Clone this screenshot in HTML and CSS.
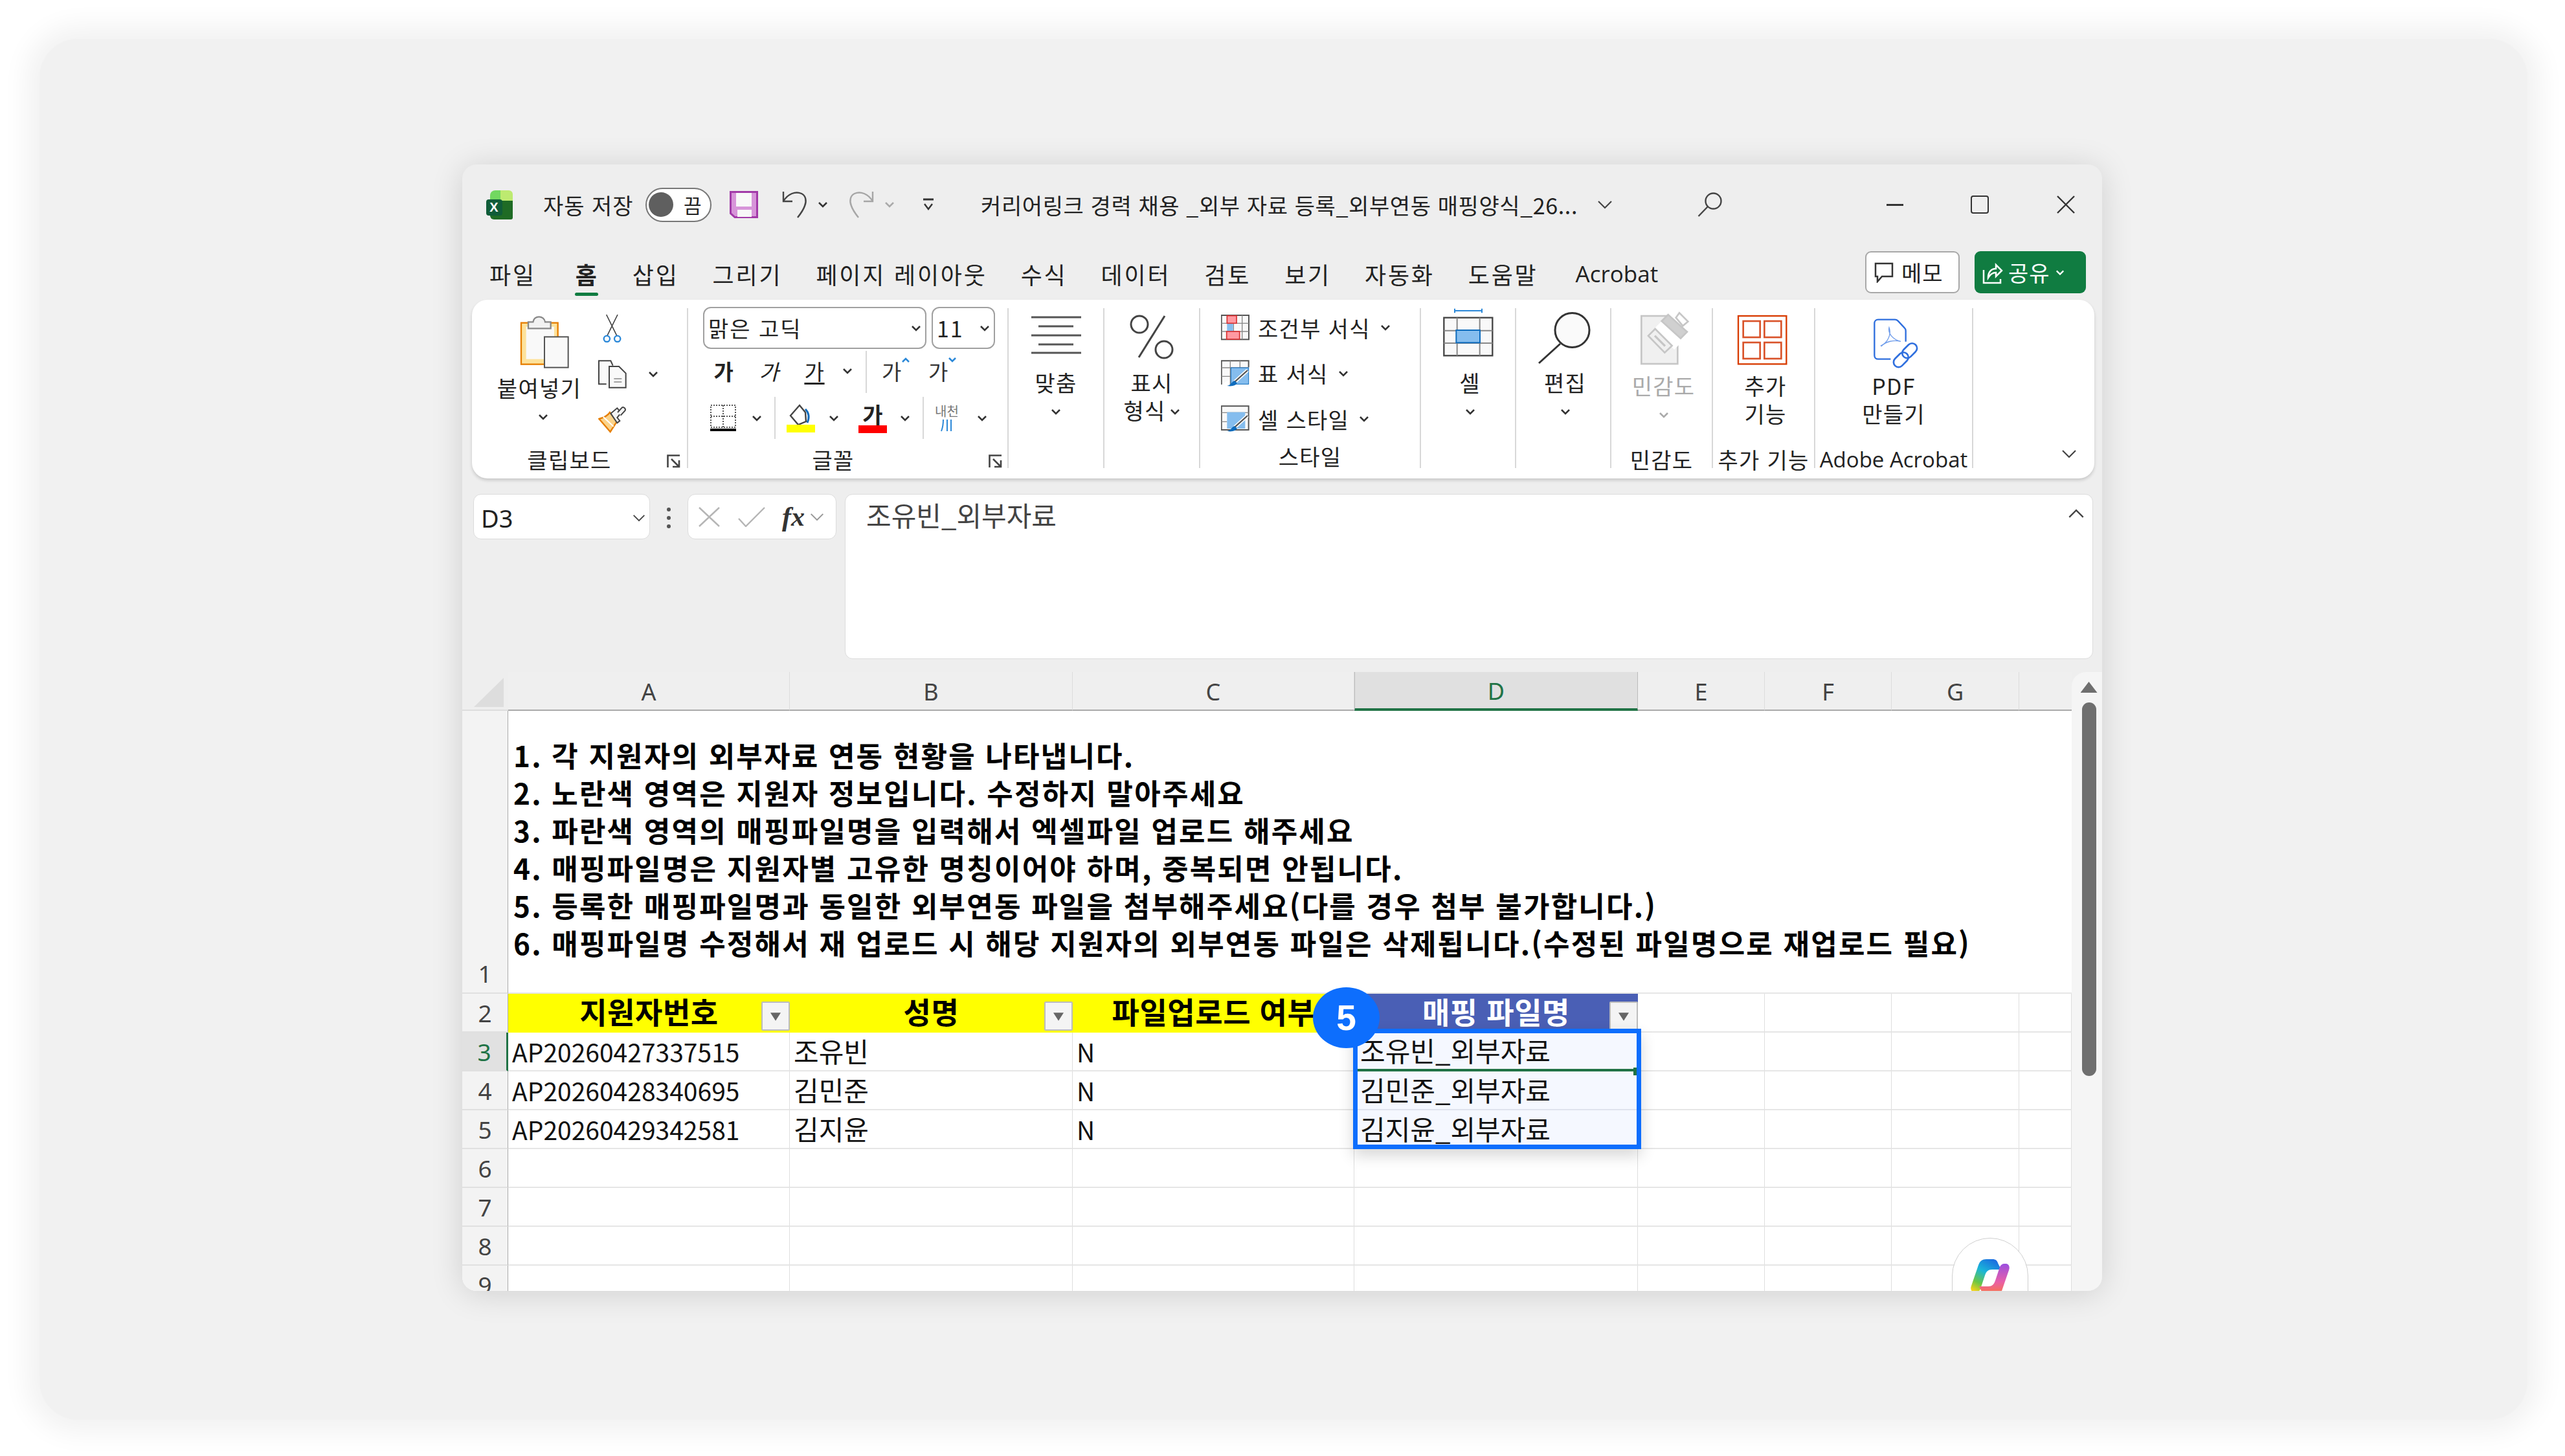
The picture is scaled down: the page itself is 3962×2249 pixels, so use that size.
FILE: index.html
```html
<!DOCTYPE html>
<html lang="ko">
<head>
<meta charset="utf-8">
<title>Excel</title>
<link rel="stylesheet" href="styles.css">
</head>
<body>
<svg class="defs" aria-hidden="true">
  <symbol id="caret" viewBox="0 0 16 10"><path d="M2 2l6 6 6-6" fill="none" stroke="currentColor" stroke-width="2.6"/></symbol>
  <symbol id="vee" viewBox="0 0 24 14"><path d="M2 2l10 10 10-10" fill="none" stroke="currentColor" stroke-width="2.2"/></symbol>
  <symbol id="launcher" viewBox="0 0 24 22"><path d="M1.500 20V1.500H20M7 7l12 12M19 9v10H9" fill="none" stroke="#444" stroke-width="2.600"/></symbol>
  <symbol id="filter" viewBox="0 0 14 14"><path d="M0 2h14L7 13z" fill="#666"/></symbol>
</svg>
<main class="stage">
<div class="window">

  <header class="titlebar">
    <svg class="ic-excel" viewBox="0 0 41 45"><path d="M6 8a8 8 0 0 1 8-8h9v16H6z" fill="#72d860"/><path d="M22 0h13a6 6 0 0 1 6 6v10H22z" fill="#bdea70"/><path d="M6 16h35v26a3 3 0 0 1-3 3H12a6 6 0 0 1-6-6z" fill="#1f6b25"/><rect x="0" y="14" width="25" height="25" rx="4" fill="#105c38"/><text x="12.500" y="33" class="ic-excel-x">X</text></svg>
    <span class="autosave">자동 저장</span>
    <span class="toggle"><i class="toggle-knob"></i><b class="toggle-text">끔</b></span>
    <svg class="ic-save" viewBox="0 0 44 42"><path d="M1.500 1.500h41v39H8l-6.500-6z" fill="#d795d9" stroke="#a23aa8" stroke-width="3"/><rect x="10" y="3" width="24" height="21" fill="#f8f8f8"/><rect x="12" y="29" width="22" height="11" fill="#f8f8f8"/></svg>
    <svg class="ic-undo" viewBox="0 0 40 44"><path d="M3 2v15h14M3 17C10 5 22 1 31 5c7 3 8 12 5 19-2 6-7 13-11 18" fill="none" stroke="#444" stroke-width="2.400"/></svg>
    <svg class="caret undo-caret"><use href="#caret"/></svg>
    <svg class="ic-redo" viewBox="0 0 40 44"><path d="M37 2v15H23M37 17C30 5 18 1 9 5 2 8 1 17 4 24c2 6 7 13 11 18" fill="none" stroke="#a6a6a6" stroke-width="2.400"/></svg>
    <svg class="caret redo-caret"><use href="#caret"/></svg>
    <svg class="ic-custom" viewBox="0 0 18 20"><path d="M1 2h16" stroke="#333" stroke-width="3"/><path d="M3 9l6 8 6-8" fill="none" stroke="#333" stroke-width="2.400"/></svg>
    <span class="doc-title">커리어링크 경력 채용 _외부 자료 등록_외부연동 매핑양식_26...</span>
    <svg class="vee title-vee"><use href="#vee"/></svg>
    <svg class="ic-search" viewBox="0 0 38 38"><circle cx="24.500" cy="13.500" r="12" fill="none" stroke="#444" stroke-width="2.400"/><path d="M16 22L1.500 37" stroke="#444" stroke-width="2.400"/></svg>
    <i class="win-min"></i>
    <i class="win-max"></i>
    <svg class="win-close" viewBox="0 0 28 28"><path d="M1 1l26 26M27 1L1 27" stroke="#333" stroke-width="2.400"/></svg>
  </header>

  <nav class="tabs">
    <span class="tab">파일</span>
    <span class="tab tab-active">홈</span>
    <span class="tab">삽입</span>
    <span class="tab">그리기</span>
    <span class="tab">페이지 레이아웃</span>
    <span class="tab">수식</span>
    <span class="tab">데이터</span>
    <span class="tab">검토</span>
    <span class="tab">보기</span>
    <span class="tab">자동화</span>
    <span class="tab">도움말</span>
    <span class="tab tab-latin">Acrobat</span>
    <span class="memo"><svg class="ic-memo" viewBox="0 0 30 32"><path d="M2 2h26v20H12l-7 8v-8H2z" fill="none" stroke="#333" stroke-width="2.500"/></svg>메모</span>
    <span class="share"><svg class="ic-share" viewBox="0 0 32 36"><path d="M2 14v20h26v-6" fill="none" stroke="#fff" stroke-width="2.500"/><path d="M9 26c0-9 5-14 12-14V6l9 9-9 9v-6c-5 0-9 3-12 8z" fill="none" stroke="#fff" stroke-width="2.500"/></svg>공유<svg class="caret share-caret"><use href="#caret"/></svg></span>
  </nav>

  <section class="ribbon">
    <div class="group g-clip">
      <div class="group-body clip-body">
        <div class="big big-paste">
          <div class="big-icon"><svg class="ic-paste" viewBox="-51 18 420 309"><rect x="75" y="86" width="170" height="192" fill="#fde29b" stroke="#e67e00" stroke-width="7"/><rect x="98" y="104" width="130" height="150" fill="#f9f9f9"/><path d="M108 112V82h22c3-32 52-32 56 0h26v30z" fill="#f2f2f2" stroke="#888" stroke-width="7"/><rect x="183" y="151" width="110" height="142" fill="#f9f9f9" stroke="#555" stroke-width="6"/></svg></div>
          <div class="line">붙여넣기</div>
          <div class="line"><svg class="caret paste-caret"><use href="#caret"/></svg></div>
        </div>
        <div class="clip-tools">
          <svg class="tool" viewBox="432 45 132 132"><path d="M470 48l52 105M522 48l-52 105" stroke="#444" stroke-width="5"/><circle cx="472" cy="160" r="14" fill="#fff" stroke="#2b88d8" stroke-width="7"/><circle cx="521" cy="160" r="14" fill="#fff" stroke="#2b88d8" stroke-width="7"/></svg>
          <div class="tool-row"><svg class="tool" viewBox="432 258 132 132"><path d="M470 370h-35V262h55l10 22" fill="#f9f9f9" stroke="#444" stroke-width="6"/><path d="M483 386V288h45l32 32v66z" fill="#f9f9f9" stroke="#444" stroke-width="6"/><path d="M505 345h36M505 360h36" stroke="#888" stroke-width="5"/></svg><svg class="caret copy-caret"><use href="#caret"/></svg></div>
          <svg class="tool" viewBox="432 470 132 132"><path d="M436 530l52 60 32-50-34-40c-10 15-30 25-50 30z" fill="#fbd38a" stroke="#e67e00" stroke-width="7"/><path d="M455 520l48 45" stroke="#fff" stroke-width="6"/><path d="M490 505l30-25 18 22-18 22 12 15-12 10z" fill="#f4f4f4" stroke="#444" stroke-width="6"/><path d="M522 500l20-22c8-6 20 6 14 14l-20 22" fill="#f4f4f4" stroke="#444" stroke-width="6"/></svg>
        </div>
      </div>
      <div class="group-label label-clip"><span class="label-text">클립보드</span><svg class="launcher"><use href="#launcher"/></svg></div>
    </div>

    <div class="group g-font">
      <div class="group-body font-body">
        <div class="font-row">
          <span class="combo combo-name">맑은 고딕<svg class="caret"><use href="#caret"/></svg></span>
          <span class="combo combo-size">11<svg class="caret"><use href="#caret"/></svg></span>
        </div>
        <div class="style-row">
          <span class="fbtn fbtn-bold">가</span>
          <span class="fbtn fbtn-italic">가</span>
          <span class="fbtn fbtn-under">가</span>
          <svg class="caret under-caret"><use href="#caret"/></svg>
          <i class="vsep sep-size"></i>
          <span class="size-btn grow">가<svg class="size-mark" viewBox="0 0 12 8"><path d="M1 7l5-5 5 5" fill="none" stroke="#2b88d8" stroke-width="2.600"/></svg></span>
          <span class="size-btn shrink">가<svg class="size-mark" viewBox="0 0 12 8"><path d="M1 1l5 5 5-5" fill="none" stroke="#2b88d8" stroke-width="2.600"/></svg></span>
        </div>
        <div class="tool-strip">
          <svg class="ic-border" viewBox="0 0 40 42"><path d="M1 1h38v34H1zM20 1v34M1 18h38" fill="none" stroke="#555" stroke-width="2" stroke-dasharray="2 2"/><path d="M0 39h40" stroke="#000" stroke-width="4"/></svg>
          <svg class="caret c-border"><use href="#caret"/></svg>
          <i class="vsep sep-a"></i>
          <svg class="ic-fill" viewBox="0 0 44 44"><path d="M20 2l9 11 1 14-12 5L6 18z" fill="#fff" stroke="#444" stroke-width="2.400"/><path d="M29 8c6 6 6 14 3 21" fill="none" stroke="#0f6cbd" stroke-width="3"/><rect y="32" width="44" height="12" fill="#ffff00"/></svg>
          <svg class="caret c-fill"><use href="#caret"/></svg>
          <span class="font-colour"><b class="font-colour-text">가</b><i class="font-colour-bar"></i></span>
          <svg class="caret c-colour"><use href="#caret"/></svg>
          <i class="vsep sep-b"></i>
          <span class="phonetic"><span class="phonetic-text">내천</span><svg class="phonetic-mark" viewBox="0 0 20 20"><path d="M4 1c0 7-1 13-3 18M10 1v18M16 1v18" fill="none" stroke="#2b88d8" stroke-width="2"/></svg></span>
          <svg class="caret c-phonetic"><use href="#caret"/></svg>
        </div>
      </div>
      <div class="group-label label-font"><span class="label-text">글꼴</span><svg class="launcher"><use href="#launcher"/></svg></div>
    </div>

    <div class="group g-align">
      <div class="group-body">
        <div class="big">
          <div class="big-icon"><svg class="ic-big" viewBox="1587 476 90 95"><path d="M1594 490h77M1594 518h77M1594 545h77M1605 504h54M1605 532h54" stroke="#555" stroke-width="3"/></svg></div>
          <div class="line">맞춤</div>
          <div class="line"><svg class="caret"><use href="#caret"/></svg></div>
        </div>
      </div>
    </div>

    <div class="group g-num">
      <div class="group-body">
        <div class="big">
          <div class="big-icon"><svg class="ic-big" viewBox="1735 476 90 95"><ellipse cx="1761" cy="501" rx="13" ry="13" fill="none" stroke="#444" stroke-width="3"/><path d="M1800 488l-40 64" stroke="#444" stroke-width="3"/><ellipse cx="1799" cy="540" rx="13" ry="13" fill="none" stroke="#444" stroke-width="3"/></svg></div>
          <div class="line">표시</div>
          <div class="line">형식<svg class="caret inline-caret"><use href="#caret"/></svg></div>
        </div>
      </div>
    </div>

    <div class="group g-styles">
      <div class="group-body styles-list">
        <div class="style-item">
          <svg class="style-icon" viewBox="52 52 132 120"><rect x="54" y="55" width="127" height="112" fill="#f9f9f9" stroke="#555" stroke-width="6"/><path d="M54 92h127M54 130h127M110 55v112M150 55v112" stroke="#888" stroke-width="4"/><rect x="80" y="92" width="28" height="38" fill="#85bdee"/><rect x="80" y="57" width="44" height="35" fill="#ff9aa2" stroke="#d83030" stroke-width="5"/><rect x="78" y="130" width="60" height="36" fill="#ff9aa2" stroke="#d83030" stroke-width="5"/></svg>
          <span>조건부 서식</span><svg class="caret"><use href="#caret"/></svg>
        </div>
        <div class="style-item">
          <svg class="style-icon" viewBox="52 264 132 126"><path d="M54 378V268h126v30" fill="#f9f9f9" stroke="#555" stroke-width="6"/><path d="M54 300h126M54 340h50M95 268v110M140 268v34" stroke="#888" stroke-width="4"/><rect x="98" y="300" width="82" height="76" fill="#85bdee" stroke="#0f6cbd" stroke-width="3"/><path d="M175 312l-62 56" stroke="#fff" stroke-width="16"/><path d="M175 312l-62 56" stroke="#555" stroke-width="7"/><path d="M114 360c-14 6-12 18-34 24 24 4 44-2 46-14z" fill="#0f6cbd"/></svg>
          <span>표 서식</span><svg class="caret"><use href="#caret"/></svg>
        </div>
        <div class="style-item">
          <svg class="style-icon" viewBox="52 476 132 126"><path d="M54 590V480h126v110z" fill="#f9f9f9" stroke="#555" stroke-width="6"/><path d="M54 510h126M54 552h26" stroke="#888" stroke-width="4"/><rect x="80" y="508" width="84" height="76" fill="#85bdee"/><path d="M175 524l-62 56" stroke="#fff" stroke-width="16"/><path d="M175 524l-62 56" stroke="#555" stroke-width="7"/><path d="M114 572c-14 6-12 18-34 24 24 4 44-2 46-14z" fill="#0f6cbd"/></svg>
          <span>셀 스타일</span><svg class="caret"><use href="#caret"/></svg>
        </div>
      </div>
      <div class="group-label"><span class="label-text">스타일</span></div>
    </div>

    <div class="group g-cells">
      <div class="group-body">
        <div class="big big-shift">
          <div class="big-icon"><svg class="ic-big" viewBox="1071 18 270 285"><path d="M1134 30h126M1134 20v20M1260 20v20" stroke="#2b88d8" stroke-width="6"/><rect x="1084" y="62" width="225" height="176" fill="#f9f9f9" stroke="#444" stroke-width="7"/><path d="M1145 62v176M1250 62v176M1084 122h225M1084 180h225" stroke="#888" stroke-width="6"/><rect x="1141" y="120" width="110" height="58" fill="#85bdee" stroke="#0f6cbd" stroke-width="6"/></svg></div>
          <div class="line">셀</div>
          <div class="line"><svg class="caret"><use href="#caret"/></svg></div>
        </div>
      </div>
    </div>

    <div class="group g-edit">
      <div class="group-body">
        <div class="big big-shift">
          <div class="big-icon"><svg class="ic-big" viewBox="2375 476 90 95"><circle cx="2430.500" cy="510" r="26.500" fill="#fafafa" stroke="#333" stroke-width="3"/><path d="M2412 531l-33 30" stroke="#333" stroke-width="3"/></svg></div>
          <div class="line">편집</div>
          <div class="line"><svg class="caret"><use href="#caret"/></svg></div>
        </div>
      </div>
    </div>

    <div class="group g-sens">
      <div class="group-body">
        <div class="big big-shift big-low">
          <div class="big-icon"><svg class="ic-low" viewBox="27 18 270 300"><rect x="58" y="54" width="168" height="222" fill="#f0f0f0" stroke="#c6c6c6" stroke-width="8"/><path d="M120 110L200 30h100v90l-90 90z" fill="#fff"/><path d="M152 78l30-30 88 80-30 30z" fill="#d0d0d0" stroke="#c6c6c6" stroke-width="8"/><path d="M218 62l16-22 40 40-24 20z" fill="#fff" stroke="#c6c6c6" stroke-width="8"/><path d="M90 146l32-32 78 78-34 32z" fill="#f0f0f0" stroke="#c6c6c6" stroke-width="8"/><path d="M120 146l48 48" stroke="#c6c6c6" stroke-width="10"/></svg></div>
          <div class="line line-muted">민감도</div>
          <div class="line line-muted"><svg class="caret"><use href="#caret"/></svg></div>
        </div>
      </div>
      <div class="group-label"><span class="label-text">민감도</span></div>
    </div>

    <div class="group g-addin">
      <div class="group-body">
        <div class="big big-shift big-low">
          <div class="big-icon"><svg class="ic-low" viewBox="495 18 270 300"><rect x="504" y="54" width="223" height="223" fill="#fff" stroke="#d83b01" stroke-width="7"/><g fill="#fff" stroke="#d9532a" stroke-width="8"><rect x="527" y="78" width="78" height="75"/><rect x="625" y="78" width="78" height="75"/><rect x="527" y="177" width="78" height="75"/><rect x="625" y="177" width="78" height="75"/></g></svg></div>
          <div class="line">추가</div>
          <div class="line">기능</div>
        </div>
      </div>
      <div class="group-label"><span class="label-text">추가 기능</span></div>
    </div>

    <div class="group g-pdf">
      <div class="group-body">
        <div class="big big-low">
          <div class="big-icon"><svg class="ic-low" viewBox="1104 18 270 300"><path d="M1225 254h-58c-10 0-17-7-17-17V88c0-10 7-17 17-17h78c6 0 10 2 14 6l30 32c4 4 6 8 6 14v50" fill="none" stroke="#2f6fde" stroke-width="7"/><path d="M1180 192c30-14 50-50 38-84-6 26 16 56 54 64-34-8-68 0-90 22z" fill="none" stroke="#6e9ceb" stroke-width="4"/><g fill="none" stroke="#2f6fde" stroke-width="8"><rect x="1290" y="176" width="46" height="78" rx="23" transform="rotate(45 1313 215)"/><rect x="1250" y="218" width="46" height="78" rx="23" transform="rotate(45 1273 257)"/></g></svg></div>
          <div class="line">PDF</div>
          <div class="line">만들기</div>
        </div>
      </div>
      <div class="group-label label-pdf"><span class="label-text">Adobe Acrobat</span></div>
    </div>

    <div class="ribbon-end"><svg class="vee"><use href="#vee"/></svg></div>
  </section>

  <section class="formula">
    <div class="namebox"><span>D3</span><svg class="vee name-vee"><use href="#vee"/></svg></div>
    <div class="dots"><i></i><i></i><i></i></div>
    <div class="fxbox">
      <svg class="fx-x" viewBox="0 0 33 31"><path d="M1 1l31 29M32 1L1 30" stroke="#b5b5b5" stroke-width="2.400"/></svg>
      <svg class="fx-check" viewBox="0 0 42 31"><path d="M1 18l11 12L41 1" fill="none" stroke="#b5b5b5" stroke-width="2.400"/></svg>
      <span class="fx-label">fx</span>
      <svg class="vee fx-vee"><use href="#vee"/></svg>
    </div>
    <div class="formula-input">
      <span>조유빈_외부자료</span>
      <svg class="vee formula-up"><use href="#vee"/></svg>
    </div>
  </section>

  <section class="sheet">
    <div class="sheet-grid">
      <div class="grid">
        <div class="corner"><i class="corner-mark"></i></div>
        <div class="col">A</div><div class="col">B</div><div class="col">C</div><div class="col col-active">D</div><div class="col">E</div><div class="col">F</div><div class="col">G</div><div class="col col-end"></div>

        <div class="rh rh-first">1</div>
        <div class="notes">
          <p>1. 각 지원자의 외부자료 연동 현황을 나타냅니다.</p>
          <p>2. 노란색 영역은 지원자 정보입니다. 수정하지 말아주세요</p>
          <p>3. 파란색 영역의 매핑파일명을 입력해서 엑셀파일 업로드 해주세요</p>
          <p>4. 매핑파일명은 지원자별 고유한 명칭이어야 하며, 중복되면 안됩니다.</p>
          <p>5. 등록한 매핑파일명과 동일한 외부연동 파일을 첨부해주세요(다를 경우 첨부 불가합니다.)</p>
          <p>6. 매핑파일명 수정해서 재 업로드 시 해당 지원자의 외부연동 파일은 삭제됩니다.(수정된 파일명으로 재업로드 필요)</p>
        </div>

        <div class="rh">2</div>
        <div class="c hd">지원자번호<span class="fbutton"><svg class="fmark"><use href="#filter"/></svg></span></div>
        <div class="c hd">성명<span class="fbutton"><svg class="fmark"><use href="#filter"/></svg></span></div>
        <div class="c hd">파일업로드 여부</div>
        <div class="c hd hd-blue">매핑 파일명<span class="fbutton"><svg class="fmark"><use href="#filter"/></svg></span></div>
        <div class="c"></div><div class="c"></div><div class="c"></div><div class="c"></div>

        <div class="rh rh-active">3</div>
        <div class="c">AP20260427337515</div><div class="c c-name">조유빈</div><div class="c">N</div><div class="c c-sel c-current">조유빈_외부자료</div><div class="c"></div><div class="c"></div><div class="c"></div><div class="c"></div>
        <div class="rh">4</div>
        <div class="c">AP20260428340695</div><div class="c c-name">김민준</div><div class="c">N</div><div class="c c-sel">김민준_외부자료</div><div class="c"></div><div class="c"></div><div class="c"></div><div class="c"></div>
        <div class="rh">5</div>
        <div class="c">AP20260429342581</div><div class="c c-name">김지윤</div><div class="c">N</div><div class="c c-sel">김지윤_외부자료</div><div class="c"></div><div class="c"></div><div class="c"></div><div class="c"></div>
        <div class="rh">6</div><div class="c"></div><div class="c"></div><div class="c"></div><div class="c"></div><div class="c"></div><div class="c"></div><div class="c"></div><div class="c"></div>
        <div class="rh">7</div><div class="c"></div><div class="c"></div><div class="c"></div><div class="c"></div><div class="c"></div><div class="c"></div><div class="c"></div><div class="c"></div>
        <div class="rh">8</div><div class="c"></div><div class="c"></div><div class="c"></div><div class="c"></div><div class="c"></div><div class="c"></div><div class="c"></div><div class="c"></div>
        <div class="rh">9</div><div class="c"></div><div class="c"></div><div class="c"></div><div class="c"></div><div class="c"></div><div class="c"></div><div class="c"></div><div class="c"></div>
      </div>
      <div class="selection"><i class="sel-handle"></i></div>
      <div class="step">5</div>
      <div class="copilot"><svg class="ic-copilot" viewBox="0 0 60 60">
        <defs>
          <linearGradient id="cpA" x1="0.700" y1="0" x2="0.200" y2="1"><stop offset="0" stop-color="#1b6fe0"/><stop offset="0.400" stop-color="#1ab6d8"/><stop offset="0.750" stop-color="#6cc644"/><stop offset="1" stop-color="#f2d21b"/></linearGradient>
          <linearGradient id="cpB" x1="0.500" y1="0" x2="0.500" y2="1"><stop offset="0" stop-color="#9b4fe0"/><stop offset="0.550" stop-color="#e85fa8"/><stop offset="1" stop-color="#ff7a2f"/></linearGradient>
        </defs>
        <path d="M24 1h10c4 0 7 2 8 6l5 10H33c-6 0-9 3-11 9L15 47c-1 3-4 5-7 5H6C1 52-1 47 1 42L12 10C14 4 18 1 24 1z" fill="url(#cpA)"/>
        <path d="M36 59H26c-4 0-7-2-8-6l-5-10h14c6 0 9-3 11-9l7-21c1-3 4-5 7-5h2c5 0 7 5 5 10L48 50c-2 6-6 9-12 9z" fill="url(#cpB)"/>
      </svg></div>
    </div>
    <aside class="vscroll">
      <i class="scroll-up"></i>
      <i class="scroll-thumb"></i>
    </aside>
  </section>

</div>
</main>
</body>
</html>
```

FILE: styles.css
```css
* { box-sizing: border-box; }
html, body { margin: 0; padding: 0; }
body {
  width: 3962px;
  height: 2249px;
  background: #fff;
  overflow: hidden;
  font-family: "Noto Sans CJK KR", "Noto Sans", sans-serif;
  color: #222;
}
i { display: block; }
.defs { width: 0; height: 0; display: block; position: absolute; }

.stage {
  margin: 60px 0 0 61px;
  width: 3843px;
  height: 2133px;
  padding: 194px 0 0 653px;
  background: #f1f1f1;
  border-radius: 60px;
  box-shadow: 0 0 40px 20px #f2f2f2;
}
.window {
  width: 2533px;
  height: 1740px;
  background: #eee;
  border-radius: 22px;
  overflow: clip;
  box-shadow: 0 4px 50px rgba(0, 0, 0, .14);
  display: flex;
  flex-direction: column;
}

/* caret */
.caret { width: 16px; height: 10px; flex: none; display: block; color: #333; }
.vee { width: 24px; height: 14px; flex: none; display: block; color: #444; }

/* title bar */
.titlebar {
  height: 124px;
  flex: none;
  display: flex;
  align-items: center;
  padding-left: 37px;
  font-size: 34px;
  letter-spacing: 1px;
}
.ic-excel { width: 41px; height: 45px; flex: none; }
.ic-excel-x { font: 700 20px "Liberation Sans", sans-serif; fill: #fff; text-anchor: middle; }
.autosave { width: 136px; margin-left: 47px; white-space: nowrap; flex: none; }
.toggle {
  margin-left: 22px;
  width: 102px;
  height: 53px;
  flex: none;
  background: #fff;
  border: 2px solid #777;
  border-radius: 27px;
  display: flex;
  align-items: center;
  padding-left: 3px;
}
.toggle-knob { width: 38px; height: 38px; border-radius: 50%; background: #5f5f5f; }
.toggle-text { font-weight: 400; font-size: 30px; margin-left: 16px; letter-spacing: 0; }
.ic-save { width: 44px; height: 42px; margin-left: 28px; flex: none; }
.ic-undo { width: 40px; height: 44px; margin-left: 36px; flex: none; }
.undo-caret { margin-left: 16px; }
.ic-redo { width: 40px; height: 44px; margin-left: 32px; flex: none; }
.redo-caret { margin-left: 15px; color: #aaa; }
.ic-custom { width: 18px; height: 20px; margin-left: 43px; flex: none; }
.doc-title { width: 924px; margin-left: 72px; white-space: nowrap; flex: none; letter-spacing: .6px; }
.title-vee { margin-left: 28px; }
.ic-search { width: 38px; height: 38px; margin-left: 131px; flex: none; }
.win-min { width: 26px; height: 3px; background: #333; margin-left: 254px; flex: none; }
.win-max { width: 28px; height: 28px; border: 2.500px solid #333; border-radius: 4px; margin-left: 104px; flex: none; }
.win-close { width: 28px; height: 28px; margin-left: 105px; flex: none; }

/* tabs */
.tabs {
  height: 85px;
  flex: none;
  display: flex;
  align-items: center;
  padding-left: 42px;
  padding-right: 25px;
  font-size: 36px;
  letter-spacing: 2.800px;
  gap: 52px;
}
.tab { position: relative; white-space: nowrap; line-height: 60px; margin-top: 4px; }
.tab-active { font-weight: 700; margin-left: 9px; }
.tab-active::after {
  content: "";
  position: absolute;
  left: -1px;
  right: 1px;
  bottom: -4px;
  height: 5px;
  background: #107c41;
  border-radius: 3px;
}
.tab-latin { font-family: "Open Sans", "Noto Sans", sans-serif; font-size: 35px; letter-spacing: 0; margin-left: 6px; }
.memo, .share {
  height: 65px;
  display: flex;
  align-items: center;
  border-radius: 9px;
  flex: none;
  font-size: 34px;
  letter-spacing: 1px;
}
.memo {
  margin-left: auto;
  width: 146px;
  background: #fff;
  border: 2px solid #a8a8a8;
  padding-left: 12px;
}
.share {
  margin-left: -29px;
  width: 172px;
  background: #107c41;
  color: #fff;
  padding-left: 12px;
}
.ic-memo { width: 30px; height: 32px; margin-right: 12px; flex: none; }
.ic-share { width: 32px; height: 36px; margin-right: 8px; flex: none; }
.share-caret { color: #fff; margin-left: 8px; width: 14px; }

/* ribbon */
.ribbon {
  margin: 0 12px 0 15px;
  height: 276px;
  flex: none;
  background: #fff;
  border-radius: 24px;
  box-shadow: 0 3px 5px rgba(0, 0, 0, .16);
  padding-top: 13px;
  display: flex;
  font-size: 34px;
  letter-spacing: 1.300px;
}
.group {
  height: 247px;
  flex: none;
  border-right: 2px solid #d8d8d8;
  display: flex;
  flex-direction: column;
}
.g-clip { width: 334px; }
.g-font { width: 495px; }
.g-align, .g-num { width: 148px; }
.g-styles { width: 341px; }
.g-cells, .g-edit { width: 147px; }
.g-sens { width: 157px; }
.g-addin { width: 158px; }
.g-pdf { width: 244px; }
.group-body { height: 212px; flex: none; display: flex; justify-content: center; }
.group-label {
  height: 35px;
  line-height: 44px;
  display: flex;
  justify-content: center;
  white-space: nowrap;
}
.label-text { display: block; }
.label-clip, .label-font { justify-content: flex-start; align-items: flex-start; }
.label-clip .label-text { width: 301px; text-align: center; }
.label-font .label-text { width: 448px; text-align: center; }
.launcher { width: 24px; height: 22px; margin-top: 14px; flex: none; }
.label-font .launcher { margin-left: 16px; }
.label-pdf { letter-spacing: 0; font-size: 33px; font-family: "Open Sans", "Noto Sans", sans-serif; }

.big { display: flex; flex-direction: column; align-items: center; }
.big-shift { margin-left: 6px; }
.big-icon { height: 95px; display: flex; justify-content: center; align-items: flex-start; }
.big-low .big-icon { height: 100px; }
.big-paste .big-icon { height: 103px; }
.ic-big { width: 90px; height: 95px; display: block; }
.ic-low { width: 90px; height: 100px; display: block; }
.ic-paste { width: 140px; height: 103px; display: block; }
.line {
  height: 43px;
  padding-bottom: 4px;
  line-height: 39px;
  display: flex;
  justify-content: center;
  align-items: center;
  white-space: nowrap;
}
.line > .caret:only-child { margin-top: 4px; }
.line-muted { color: #aaa; }
.line-muted .caret { color: #aaa; }
.inline-caret { margin-left: 6px; }
.line > .paste-caret { margin-left: 12px; }

.clip-body { justify-content: flex-start; padding-left: 34px; }
.big-paste { width: 140px; flex: none; }
.clip-tools { margin-left: 21px; padding-top: 9px; display: flex; flex-direction: column; gap: 27px; }
.tool { width: 44px; height: 44px; display: block; flex: none; }
.tool-row { display: flex; align-items: center; }
.copy-caret { margin-left: 33px; }

/* font group */
.font-body { flex-direction: column; justify-content: flex-start; padding-left: 23px; }
.font-row { display: flex; gap: 8px; height: 65px; margin-top: -2px; flex: none; }
.combo {
  height: 65px;
  background: #fff;
  border: 2px solid #a0a0a0;
  border-radius: 12px;
  display: flex;
  align-items: center;
  justify-content: space-between;
  padding: 0 6px;
  letter-spacing: 2px;
}
.combo-name { width: 345px; }
.combo-size { width: 98px; }
.style-row { height: 68px; margin-left: -3px; display: flex; align-items: center; flex: none; font-size: 33px; letter-spacing: .8px; }
.fbtn { width: 70px; text-align: center; flex: none; }
.fbtn-bold { font-weight: 700; }
.fbtn-italic { font-style: italic; }
.fbtn-under { text-decoration: underline; text-underline-offset: 4px; }
.under-caret { margin-left: 8px; }
.vsep { width: 2px; background: #d8d8d8; flex: none; align-self: stretch; }
.sep-size { margin-left: 20px; margin-top: 3px; }
.size-btn { display: flex; align-items: flex-start; flex: none; color: #333; line-height: 46px; }
.grow { margin-left: 23px; width: 56px; }
.shrink { margin-left: 16px; width: 46px; }
.size-mark { width: 12px; height: 8px; margin-top: 2px; flex: none; }
.tool-strip { margin-top: 6px; height: 65px; display: flex; align-items: center; flex: none; padding-left: 11px; }
.ic-border { width: 40px; height: 42px; flex: none; }
.c-border { margin-left: 24px; }
.sep-a { margin-left: 19px; }
.ic-fill { width: 44px; height: 44px; margin-left: 17px; flex: none; }
.c-fill { margin-left: 21px; }
.font-colour { width: 44px; margin-left: 30px; height: 46px; flex: none; display: flex; flex-direction: column; align-items: center; }
.font-colour-text { display: block; font-size: 34px; height: 34px; line-height: 34px; font-weight: 700; letter-spacing: 0; }
.font-colour-bar { width: 44px; height: 12px; background: #f00; }
.c-colour { margin-left: 20px; }
.sep-b { margin-left: 19px; }
.phonetic { width: 41px; margin-left: 15px; height: 46px; flex: none; display: flex; flex-direction: column; align-items: center; }
.phonetic-text { font-size: 20px; line-height: 24px; color: #777; letter-spacing: 0; }
.phonetic-mark { width: 20px; height: 20px; }
.c-phonetic { margin-left: 26px; }

/* styles */
.styles-list { flex-direction: column; justify-content: flex-start; margin-top: -5px; padding-left: 32px; }
.style-item { height: 70.500px; display: flex; align-items: center; white-space: nowrap; flex: none; }
.style-icon { width: 44px; height: 42px; margin-right: 13px; flex: none; }
.style-item .caret { margin-left: 15px; }

.ribbon-end { flex: 1; height: 247px; display: flex; justify-content: flex-end; align-items: flex-end; padding: 0 27px 15px 0; }

/* formula bar */
.formula { height: 255px; flex: none; margin-top: 24px; padding-left: 17px; display: flex; align-items: flex-start; }
.namebox, .fxbox, .formula-input {
  background: #fff;
  border: 1.500px solid #dcdcdc;
  border-radius: 12px;
  flex: none;
}
.namebox {
  width: 273px;
  height: 70px;
  display: flex;
  align-items: center;
  justify-content: space-between;
  padding: 4px 6px 0 11px;
  font-family: "Noto Sans", sans-serif;
  font-size: 38px;
  color: #222;
}
.name-vee { width: 20px; height: 12px; }
.dots { width: 58px; flex: none; padding-top: 21px; display: flex; flex-direction: column; align-items: center; gap: 7px; }
.dots i { width: 6px; height: 6px; border-radius: 50%; background: #555; }
.fxbox { width: 230px; height: 70px; display: flex; align-items: center; padding-left: 16px; }
.fx-x { width: 33px; height: 31px; flex: none; }
.fx-check { width: 42px; height: 31px; margin-left: 28px; flex: none; }
.fx-label { font: italic 700 42px "Liberation Serif", serif; color: #333; margin-left: 26px; width: 40px; line-height: 60px; }
.fx-vee { width: 24px; height: 13px; margin-left: 2px; color: #999; }
.formula-input {
  width: 1928px;
  height: 255px;
  margin-left: 13px;
  padding: 3px 12px 0 32px;
  display: flex;
  justify-content: space-between;
  font-size: 42px;
  line-height: 56px;
  color: #444;
}
.formula-up { width: 26px; height: 15px; margin-top: 19px; transform: scaleY(-1); }

/* sheet */
.sheet { flex: 1; margin-top: 20px; display: flex; min-height: 0; overflow: hidden; }
.sheet-grid { width: 2486px; height: 100%; position: relative; overflow: hidden; background: #fff; }
.grid {
  display: grid;
  grid-template-columns: 71px 435px 437px 435px 438px 196px 196px 197px 81px;
  grid-template-rows: 60px 437px;
  grid-auto-rows: 60px;
  font-size: 39px;
  color: #111;
}
.corner { background: #eee; border-bottom: 2px solid #ddd; padding: 9px 0 0 18px; }
.corner-mark { width: 46px; height: 45px; background: #ddd; clip-path: polygon(100% 0, 100% 100%, 0 100%); }
.col {
  background: #efefef;
  border-right: 1.500px solid #dcdcdc;
  border-bottom: 2px solid #aaa;
  display: flex;
  align-items: center;
  justify-content: center;
  padding-top: 2px;
  font-family: "Noto Sans", sans-serif;
  font-size: 36px;
  color: #444;
}
.col-active {
  background: #e0e0e0;
  color: #217346;
  border-left: 1.500px solid #bbb;
  border-right: 1.500px solid #bbb;
  border-bottom: 4px solid #217346;
}
.col-end { border-right: 0; }
.rh {
  background: #f3f3f3;
  border-right: 1.500px solid #aaa;
  border-bottom: 2px solid #e0e0e0;
  display: flex;
  align-items: center;
  justify-content: center;
  font-family: "Noto Sans", sans-serif;
  font-size: 37px;
  color: #444;
}
.rh-first { align-items: flex-end; padding-bottom: 4px; }
.rh-active { background: #e1e1e1; color: #217346; border-right: 3px solid #217346; }
.notes {
  grid-column: 2 / -1;
  border-bottom: 2px solid #e6e6e6;
  padding: 39px 0 0 8px;
  font-weight: 700;
  font-size: 44px;
  letter-spacing: 2.200px;
  line-height: 58px;
  color: #000;
}
.notes p { margin: 0; white-space: nowrap; }
.c {
  position: relative;
  border-right: 1.500px solid #dedede;
  border-bottom: 2.500px solid #e6e6e6;
  display: flex;
  align-items: center;
  padding-left: 6px;
  white-space: nowrap;
  overflow: visible;
}
.c-name { font-size: 42px; padding-bottom: 4px; }
.hd {
  background: #ff0;
  border: 0;
  justify-content: center;
  padding: 0 0 8px;
  font-weight: 700;
  font-size: 46px;
  letter-spacing: .6px;
  color: #000;
}
.hd-blue { background: #4a5fb5; color: #fff; }
.c-sel { background: #f5f8ff; padding: 0 0 3px 9px; font-size: 42px; border-bottom-color: #dfe3ee; }
.c-current { border-bottom: 4px solid #217346; }
.fbutton {
  position: absolute;
  right: 0;
  top: 12px;
  width: 44px;
  height: 45px;
  background: #f4f4f4;
  border: 2px solid #bcbcbc;
  border-radius: 2px;
  display: flex;
  align-items: center;
  justify-content: center;
}
.fmark { width: 16px; height: 16px; display: block; }

.selection {
  position: absolute;
  left: 1376px;
  top: 551px;
  width: 445px;
  height: 186px;
  border: 7px solid #0d6efd;
  box-shadow: 0 10px 22px rgba(0, 0, 0, .16);
}
.sel-handle { position: absolute; right: 0; top: 53px; width: 5px; height: 12px; background: #217346; }
.step {
  position: absolute;
  left: 1314px;
  top: 487px;
  width: 103px;
  height: 94px;
  border-radius: 50%;
  background: #0d6efd;
  color: #fff;
  display: flex;
  align-items: center;
  justify-content: center;
  font: 700 55px "Liberation Sans", sans-serif;
}
.copilot {
  position: absolute;
  left: 2301px;
  top: 874px;
  width: 118px;
  height: 120px;
  background: #fff;
  border: 1.500px solid #cfcfcf;
  border-radius: 59px 59px 0 0;
  padding: 31px 0 0 28px;
}
.ic-copilot { width: 60px; height: 60px; display: block; }

.vscroll {
  width: 47px;
  flex: none;
  background: #f5f5f5;
  border-radius: 22px 0 0 0;
  display: flex;
  flex-direction: column;
  align-items: center;
  padding-top: 15px;
}
.scroll-up { width: 26px; height: 17px; background: #6f6f6f; clip-path: polygon(50% 0, 100% 100%, 0 100%); flex: none; margin-left: 6px; }
.scroll-thumb { width: 22px; height: 577px; margin: 15px 0 0 6px; background: #6f6f6f; border-radius: 11px; flex: none; }
```
